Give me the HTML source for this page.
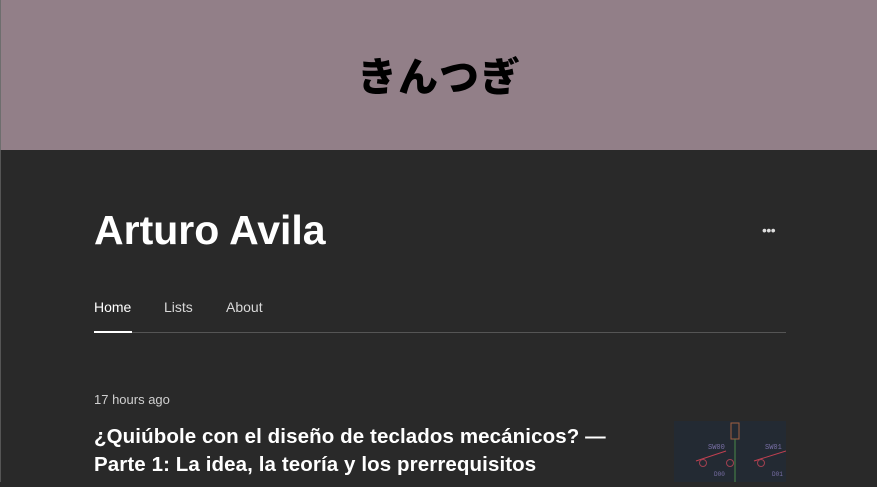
<!DOCTYPE html>
<html><head><meta charset="utf-8"><style>
*{margin:0;padding:0;box-sizing:border-box}
html,body{width:877px;height:482px;overflow:hidden;background:#292929;font-family:"Liberation Sans","Noto Sans CJK JP",sans-serif}
.hdr{position:absolute;left:0;top:0;width:877px;height:150px;background:#927f88;border-left:1px solid #6e6e6e}
.hdr h1{position:absolute;left:0;right:0;top:50px;text-align:center;font:900 40px "Noto Sans CJK JP","WenQuanYi Zen Hei",sans-serif;color:#000;line-height:48px;letter-spacing:1px}
.bl{position:absolute;left:0;top:150px;width:1px;height:332px;background:#555}
.name{position:absolute;left:94px;top:206px;font-weight:bold;font-size:41px;color:#fff;letter-spacing:0;line-height:48px}
.dots{position:absolute;left:762px;top:227px;color:#ddd;font-size:14px;letter-spacing:-0.5px;line-height:6px}
.nav{position:absolute;top:299px;font-size:14px;color:#d8d8d8}
.line{position:absolute;left:94px;top:332px;width:692px;height:1px;background:#555}
.act{position:absolute;left:94px;top:331px;width:38px;height:2px;background:#fff}
.time{position:absolute;left:94px;top:392px;font-size:13px;color:#d0d0d0}
.title{position:absolute;left:94px;top:423px;font-weight:bold;font-size:20.5px;color:#fff;line-height:28px;letter-spacing:0.1px}
.img{position:absolute;left:674px;top:421px;width:112px;height:61px;background:#232a33}
</style></head><body>
<div class="hdr"><h1>きんつぎ</h1></div>
<div class="bl"></div>
<div class="name">Arturo Avila</div>
<div class="dots">•••</div>
<div class="nav" style="left:94px;color:#fff">Home</div>
<div class="nav" style="left:164px">Lists</div>
<div class="nav" style="left:226px">About</div>
<div class="line"></div><div class="act"></div>
<div class="time">17 hours ago</div>
<div class="title">¿Quiúbole con el diseño de teclados mecánicos? —<br>Parte 1: La idea, la teoría y los prerrequisitos</div>
<div class="img"><svg width="112" height="61" viewBox="0 0 112 61">
<rect x="57" y="2" width="8" height="16" fill="none" stroke="#a06040" stroke-width="1"/>
<line x1="61" y1="18" x2="61" y2="61" stroke="#4a8a4a"/>
<text x="34" y="28" fill="#7a70a8" font-size="7" font-family="Liberation Mono">SW00</text>
<text x="91" y="28" fill="#7a70a8" font-size="7" font-family="Liberation Mono">SW01</text>
<line x1="22" y1="40" x2="52" y2="30" stroke="#c04050"/>
<line x1="80" y1="40" x2="112" y2="30" stroke="#c04050"/>
<circle cx="29" cy="42" r="3.5" fill="none" stroke="#a04050"/>
<circle cx="56" cy="42" r="3.5" fill="none" stroke="#a04050"/>
<circle cx="87" cy="42" r="3.5" fill="none" stroke="#a04050"/>
<text x="40" y="55" fill="#7a70a8" font-size="6" font-family="Liberation Mono">D00</text>
<text x="98" y="55" fill="#7a70a8" font-size="6" font-family="Liberation Mono">D01</text>
</svg></div>
</body></html>
